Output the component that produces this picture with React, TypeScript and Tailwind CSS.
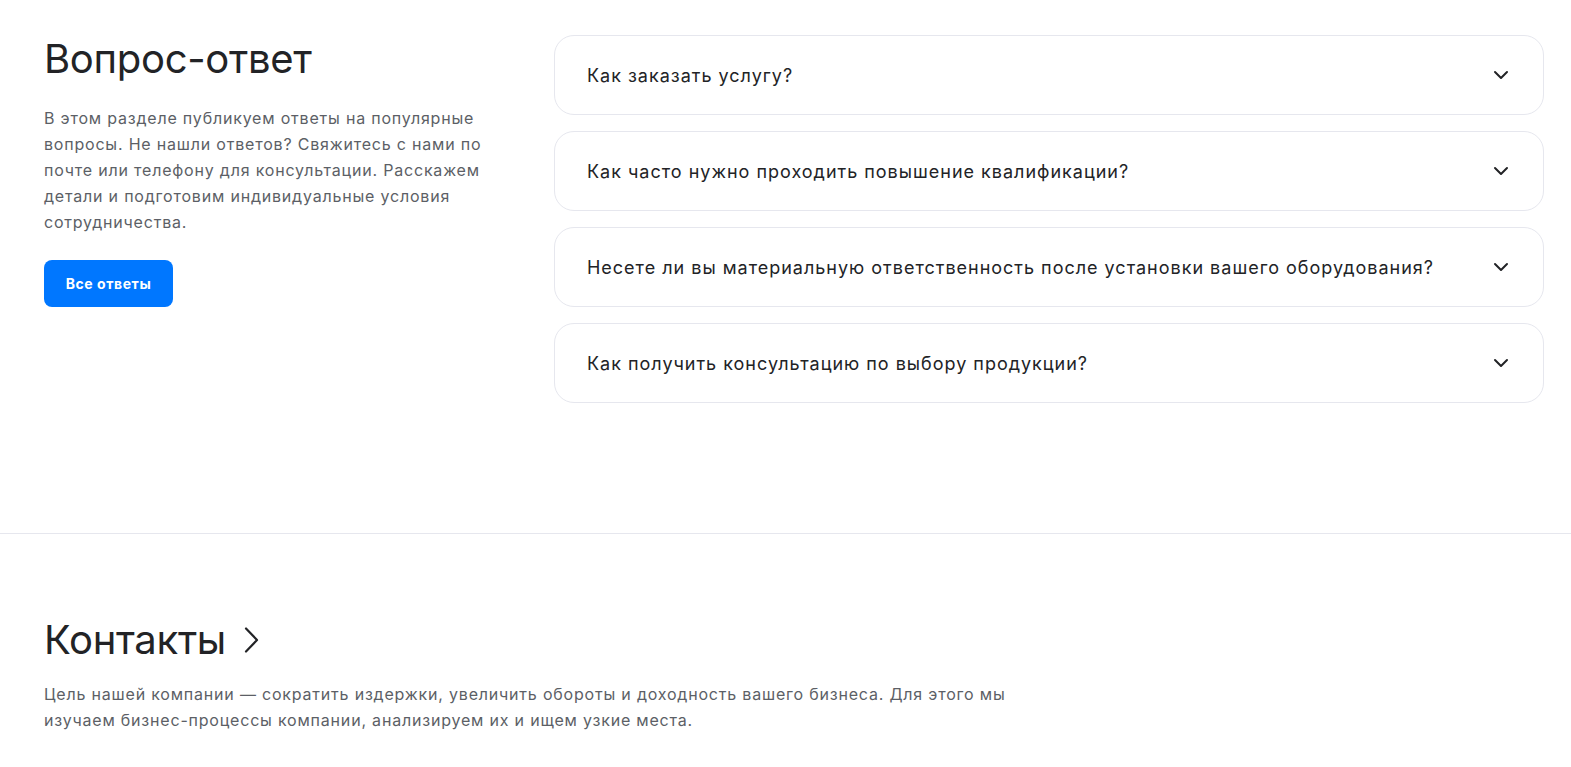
const QUESTIONS = [
  'Как заказать услугу?',
  'Как часто нужно проходить повышение квалификации?',
  'Несете ли вы материальную ответственность после установки вашего оборудования?',
  'Как получить консультацию по выбору продукции?',
];

function ChevronDownIcon() {
  return (
    <svg width="16" height="10" viewBox="0 0 16 10" fill="none" className="shrink-0">
      <polyline points="2,2 8,8 14,2" stroke="#222326" strokeWidth="2" strokeLinecap="round" strokeLinejoin="round" />
    </svg>
  );
}

function ChevronRightIcon() {
  return (
    <svg width="16" height="26" viewBox="0 0 16 26" fill="none" className="shrink-0">
      <polyline points="2,1.5 13,13 2,24.5" stroke="#222326" strokeWidth="2.2" strokeLinecap="round" strokeLinejoin="round" />
    </svg>
  );
}

export default function App() {
  return (
    <div className="min-h-screen bg-white text-[#222326]" style={{ fontFamily: 'Inter, "Noto Sans", sans-serif' }}>
      {/* FAQ */}
      <section className="flex pl-[44px] pr-[27px] pt-[35px] pb-[130px] border-b border-[#e6e7ee]">
        <div className="w-[465px] shrink-0">
          <h2 className="text-[40px] leading-[48px] font-normal tracking-[-0.3px]">Вопрос-ответ</h2>
          <p className="mt-[22px] text-[16px] leading-[26px] text-[#5c5f66] tracking-[0.05em]">
            В этом разделе публикуем ответы на популярные вопросы. Не нашли ответов? Свяжитесь с нами по почте или
            телефону для консультации. Расскажем детали и подготовим индивидуальные условия сотрудничества.
          </p>
          <button className="mt-[25px] h-[47px] w-[129px] rounded-lg bg-[#0077ff] text-white text-[14px] font-bold tracking-[0.04em]">
            Все ответы
          </button>
        </div>
        <div className="flex-1 ml-[45px] flex flex-col gap-4">
          {QUESTIONS.map(q => (
            <div
              key={q}
              className="h-[80px] flex items-center justify-between rounded-[20px] border border-[#e6e7ee] pl-8 pr-[34px]"
            >
              <span className="text-[18px] text-[#222326] tracking-[0.055em]">{q}</span>
              <ChevronDownIcon />
            </div>
          ))}
        </div>
      </section>

      {/* Contacts */}
      <section className="pl-[44px] pr-[27px] pt-[82px] pb-10">
        <h2 className="flex items-center gap-[18px] text-[40px] leading-[48px] font-normal tracking-[-0.3px]">
          Контакты
          <ChevronRightIcon />
        </h2>
        <p className="mt-[17px] max-w-[1000px] text-[16px] leading-[26px] text-[#5c5f66] tracking-[0.05em]">
          Цель нашей компании — сократить издержки, увеличить обороты и доходность вашего бизнеса. Для этого мы изучаем
          бизнес-процессы компании, анализируем их и ищем узкие места.
        </p>
      </section>
    </div>
  );
}
